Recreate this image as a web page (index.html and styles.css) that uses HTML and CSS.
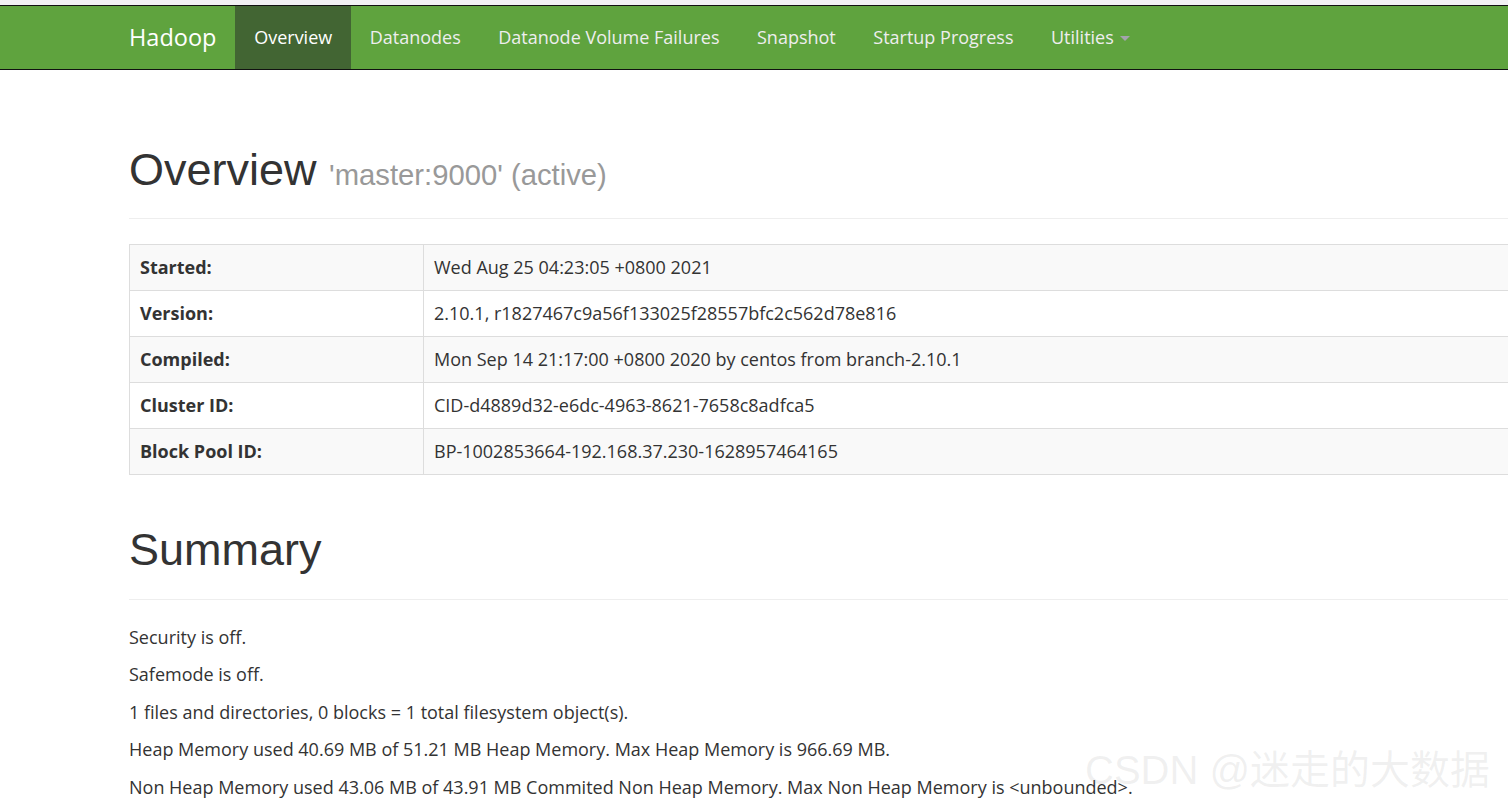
FILE: index.html
```html
<!DOCTYPE html>
<html lang="en">
<head>
<meta charset="utf-8">
<title>Namenode information</title>
<link rel="stylesheet" href="styles.css">
</head>
<body>
<div class="topstrip"></div>
<header class="navbar">
  <div class="nav-container">
    <a class="brand" href="#">Hadoop</a>
    <ul class="nav">
      <li class="active"><a href="#">Overview</a></li>
      <li><a href="#">Datanodes</a></li>
      <li><a href="#">Datanode Volume Failures</a></li>
      <li><a href="#">Snapshot</a></li>
      <li><a href="#">Startup Progress</a></li>
      <li><a href="#">Utilities<span class="caret"></span></a></li>
    </ul>
  </div>
</header>
<main class="container">
  <div class="page-header first">
    <h1>Overview <small>'master:9000' (active)</small></h1>
  </div>
  <table class="info">
    <tr class="odd"><th>Started:</th><td>Wed Aug 25 04:23:05 +0800 2021</td></tr>
    <tr><th>Version:</th><td>2.10.1, r1827467c9a56f133025f28557bfc2c562d78e816</td></tr>
    <tr class="odd"><th>Compiled:</th><td>Mon Sep 14 21:17:00 +0800 2020 by centos from branch-2.10.1</td></tr>
    <tr><th>Cluster ID:</th><td>CID-d4889d32-e6dc-4963-8621-7658c8adfca5</td></tr>
    <tr class="odd"><th>Block Pool ID:</th><td>BP-1002853664-192.168.37.230-1628957464165</td></tr>
  </table>
  <div class="page-header summary">
    <h1>Summary</h1>
  </div>
  <p>Security is off.</p>
  <p>Safemode is off.</p>
  <p>1 files and directories, 0 blocks = 1 total filesystem object(s).</p>
  <p>Heap Memory used 40.69 MB of 51.21 MB Heap Memory. Max Heap Memory is 966.69 MB.</p>
  <p>Non Heap Memory used 43.06 MB of 43.91 MB Commited Non Heap Memory. Max Non Heap Memory is &lt;unbounded&gt;.</p>
</main>
<div class="watermark">CSDN @迷走的大数据</div>
</body>
</html>
```
FILE: styles.css
```css
html, body {
  margin: 0;
  padding: 0;
  overflow: hidden;
  background: #fff;
}
body {
  font-family: "Open Sans", "Noto Sans CJK SC", sans-serif;
  font-size: 18px;
  line-height: 25px;
  color: #333;
}
.topstrip {
  height: 5px;
  background: #f1f1f3;
}
.navbar {
  background: #5fa33e;
  border-top: 1px solid #111;
  border-bottom: 1px solid #111;
  height: 63px;
}
.nav-container {
  margin-left: 110px;
  display: flex;
  height: 63px;
}
.brand {
  display: block;
  padding: 0 19px;
  font-size: 23.5px;
  line-height: 63px;
  color: #fff;
  text-decoration: none;
}
.nav {
  list-style: none;
  margin: 0;
  padding: 0;
  display: flex;
}
.nav li a {
  display: flex;
  align-items: center;
  height: 63px;
  padding: 0 18.75px;
  color: #eee;
  text-decoration: none;
  font-size: 18px;
}
.nav li.active a {
  background: #426533;
  color: #fff;
}
.caret {
  display: inline-block;
  margin-left: 6px;
  margin-top: 2px;
  width: 0;
  height: 0;
  border-top: 5px solid #a3a3ad;
  border-left: 5px solid transparent;
  border-right: 5px solid transparent;
}
.container {
  margin-left: 110px;
  width: 1425px;
  padding: 0 19px;
}
.page-header {
  padding-bottom: 11.25px;
  border-bottom: 1px solid #eee;
  margin-bottom: 25px;
}
.page-header.first {
  margin-top: 75px;
}
.page-header.summary {
  margin-top: 50px;
}
.page-header h1 {
  margin: 0 0 12.5px;
  font-family: "Liberation Sans", Arial, sans-serif;
  font-size: 45px;
  line-height: 49.5px;
  font-weight: 400;
  color: #333;
}
.page-header h1 small {
  font-size: 29.25px;
  line-height: 1;
  color: #999;
}
.info {
  width: 100%;
  border-collapse: collapse;
  border: 1px solid #ddd;
  margin-bottom: 25px;
}
.info th, .info td {
  border: 1px solid #ddd;
  padding: 10px;
  text-align: left;
  vertical-align: top;
  line-height: 25px;
}
.info th {
  width: 273px;
  font-weight: 700;
}
.info tr.odd {
  background: #f9f9f9;
}
p {
  margin: 0 0 12.5px;
}
.watermark {
  position: absolute;
  left: 1085px;
  top: 745px;
  font-family: "Liberation Sans", "Noto Sans CJK SC", sans-serif;
  font-size: 40px;
  line-height: 50px;
  color: rgba(160, 160, 160, 0.16);
  white-space: nowrap;
  pointer-events: none;
}
```
